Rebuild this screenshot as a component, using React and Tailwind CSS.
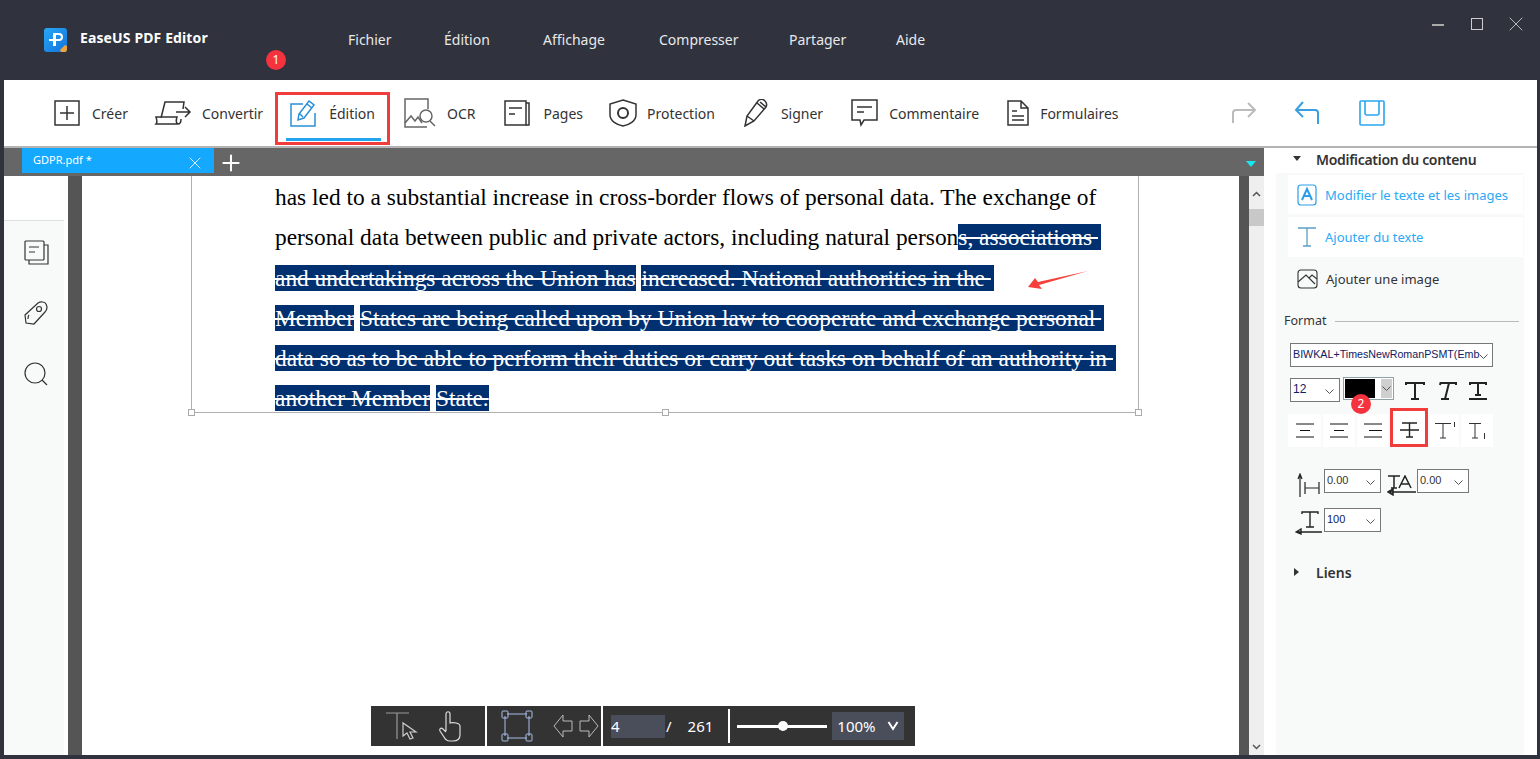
import { Plus, X } from 'lucide-react';

const ui = { fontFamily: '"Noto Sans", "Open Sans", sans-serif' };

const menu = [
  { label: 'Fichier', cls: 'w-[96px]' },
  { label: 'Édition', cls: 'w-[99px]' },
  { label: 'Affichage', cls: 'w-[116px]' },
  { label: 'Compresser', cls: 'w-[130px]' },
  { label: 'Partager', cls: 'w-[107px]' },
  { label: 'Aide', cls: 'w-[40px]' },
];

const Svg = ({ w, h, children, className = '', stroke = '#333', sw = 1.5 }) => (
  <svg width={w} height={h} viewBox={`0 0 ${w} ${h}`} fill="none" stroke={stroke} strokeWidth={sw} className={`shrink-0 ${className}`}>
    {children}
  </svg>
);

const CreerIcon = () => (
  <Svg w={26} h={26}>
    <rect x="1" y="1" width="24" height="24" />
    <path d="M13 6v14M6 13h14" />
  </Svg>
);
const ConvertirIcon = () => (
  <Svg w={38} h={26}>
    <path d="M7 18 11 2h19l-1 7M2 24h22c-2-1-2-4-1-7H2c1 3 1 6 0 7ZM24 24c2 0 3-2 3-5" />
    <path d="M22 12h14M31 7l5 5-5 5" />
  </Svg>
);
const EditionIcon = () => (
  <Svg w={26} h={28} stroke="#2b8fd6">
    <path d="M13 5H1v22h24V14" />
    <path d="m8 21 1-6L19 2l5 4-10 13-6 2ZM17 5l5 4M10 15l3 3" />
  </Svg>
);
const OcrIcon = () => (
  <Svg w={32} h={30} stroke="#666">
    <path d="M24 11V1H1v28h22" />
    <path d="m1 25 6-7 4 5 3-4 4 6" />
    <circle cx="22" cy="18" r="6" />
    <path d="m26 23 5 5" />
  </Svg>
);
const PagesIcon = () => (
  <Svg w={26} h={26}>
    <rect x="1" y="1" width="21" height="24" />
    <path d="M22 3h3v22H22M5 8h13M5 14h6" />
  </Svg>
);
const ProtectionIcon = () => (
  <Svg w={28} h={28}>
    <path d="M14 1 27 5v11c0 6-7 10-13 11C8 26 1 22 1 16V5L14 1Z" />
    <circle cx="14" cy="14" r="5" strokeWidth="2" />
  </Svg>
);
const SignerIcon = () => (
  <Svg w={26} h={28}>
    <path d="M2 27 4 17 15 2c2-2 4-2 6-1l1 1c2 2 2 4 1 6L11 22 2 27ZM4 17l7 5M14 4l7 6M17 3l6 5" />
  </Svg>
);
const CommentIcon = () => (
  <Svg w={28} h={28}>
    <path d="M1 1h25v20H13l-3 5-1-5H1V1Z" />
    <path d="M6 8h15M6 13h7" />
  </Svg>
);
const FormIcon = () => (
  <Svg w={22} h={26}>
    <path d="M1 1h13l7 7v17H1V1ZM14 1v7h7" />
    <path d="M5 11h5M5 16h12" />
    <path d="M5 20h12" />
  </Svg>
);

const tools = [
  { label: 'Créer', icon: CreerIcon, gap: 'gap-[12px]', cls: 'ml-[50px]' },
  { label: 'Convertir', icon: ConvertirIcon, gap: 'gap-[10px]', cls: 'ml-[26px]' },
  { label: 'Édition', icon: EditionIcon, gap: 'gap-[13px]', cls: 'ml-[27px]' },
  { label: 'OCR', icon: OcrIcon, gap: 'gap-[11px]', cls: 'ml-[29px]' },
  { label: 'Pages', icon: PagesIcon, gap: 'gap-[13px]', cls: 'ml-[29px]' },
  { label: 'Protection', icon: ProtectionIcon, gap: 'gap-[10px]', cls: 'ml-[26px]' },
  { label: 'Signer', icon: SignerIcon, gap: 'gap-[12px]', cls: 'ml-[28px]' },
  { label: 'Commentaire', icon: CommentIcon, gap: 'gap-[10px]', cls: 'ml-[28px]' },
  { label: 'Formulaires', icon: FormIcon, gap: 'gap-[11px]', cls: 'ml-[28px]' },
];

const Badge = ({ n, className }) => (
  <div className={`absolute w-[20px] h-[20px] rounded-full bg-[#f5333f] text-white text-[12px] flex items-center justify-center ${className}`}>{n}</div>
);

const Sel = ({ children, trail = false }) => (
  <span className={`bg-[#003070] text-white line-through decoration-2 decoration-white whitespace-pre ${trail ? 'pr-[3px]' : ''}`}>{children}</span>
);

const lines = [
  <>has led to a substantial increase in cross-border flows of personal data. The exchange of</>,
  <>personal data between public and private actors, including natural person<Sel trail>s, associations </Sel></>,
  <><Sel>and undertakings across the Union has</Sel> <Sel trail>increased. National authorities in the </Sel></>,
  <><Sel>Member</Sel> <Sel trail>States are being called upon by Union law to cooperate and exchange personal </Sel></>,
  <><Sel trail>data so as to be able to perform their duties or carry out tasks on behalf of an authority in </Sel></>,
  <><Sel>another Member</Sel> <Sel>State.</Sel></>,
];

const Chevron = ({ className = '' }) => (
  <svg width="9" height="6" viewBox="0 0 9 6" fill="none" stroke="#555" strokeWidth="1" className={className}>
    <path d="m.5.5 4 4 4-4" />
  </svg>
);

const Select = ({ value, className = '', textClass = 'text-[#102060] text-[12px]' }) => (
  <div className={`bg-white border border-[#777] h-[24px] flex items-start justify-between pl-[2px] pr-[5px] ${className}`}>
    <span className={`leading-[20px] whitespace-nowrap ${textClass}`} style={{ fontFamily: '"Liberation Sans", sans-serif' }}>{value}</span>
    <Chevron className="mt-[10px] shrink-0" />
  </div>
);

const Handle = ({ className }) => (
  <div className={`absolute w-[7px] h-[7px] bg-white border border-[#aaa] ${className}`} />
);

export default function App() {
  return (
    <div className="w-[1540px] h-[759px] bg-[#30333d] overflow-hidden flex flex-col relative" style={ui}>
      {/* title bar */}
      <div className="h-[80px] flex items-start shrink-0">
        <svg width="24" height="24" viewBox="0 0 24 24" className="ml-[44px] mt-[28px] shrink-0">
          <defs>
            <linearGradient id="logo" x1="0" y1="0" x2="1" y2="1">
              <stop offset="0" stopColor="#28a8f5" />
              <stop offset="1" stopColor="#1272dc" />
            </linearGradient>
          </defs>
          <rect width="23" height="24" rx="3" fill="url(#logo)" />
          <path d="M9 5h6c3 0 4 2 4 4s-1 4-4 4h-3v5H9v-5H5v-2h4V5Zm3 2v4h3c1 0 2-1 2-2s-1-2-2-2h-3Z" fill="#fff" />
          <path d="m16 22 5-5 2 1v3c0 2-1 3-2 3h-4l-1-2Z" fill="#f0a23c" />
        </svg>
        <div className="ml-[12px] mt-[28px] text-white text-[14px] font-bold leading-[20px] w-[268px] tracking-[0.12px]">EaseUS PDF Editor</div>
        <div className="flex mt-[30px] text-[#e8e8ea] text-[14px] leading-[20px]">
          {menu.map((m) => (
            <div key={m.label} className={m.cls}>{m.label}</div>
          ))}
        </div>
        <div className="ml-auto flex items-start mt-[18px] mr-[18px] gap-[27px]">
          <div className="w-[12px] h-[2px] bg-[#aaa] mt-[6px]" />
          <div className="w-[12px] h-[12px] border border-[#ccc]" />
          <X size={24} strokeWidth={0.8} color="#ddd" className="-m-[6px]" />
        </div>
      </div>

      <Badge n="1" className="left-[266px] top-[50px]" />

      {/* toolbar */}
      <div className="ml-[4px] mr-[3px] h-[68px] bg-white border-b-2 border-[#b4b4b4] flex items-center shrink-0 text-[14px] text-[#333] relative">
        {tools.map((t) => (
          <div key={t.label} className={`flex items-center ${t.gap} ${t.cls}`}>
            <t.icon />
            <span className="leading-[20px] mt-[2px]">{t.label}</span>
          </div>
        ))}
        <div className="ml-auto flex items-center mr-[152px]">
          <Svg w={26} h={22} stroke="#bbb" sw={2}>
            <path d="M2 21V11c0-2 1-3 3-3h19M17 1l7 7-7 7" />
          </Svg>
          <Svg w={26} h={24} stroke="#3a9fe0" sw={2} className="ml-[37px]">
            <path d="M24 23V12c0-2-1-3-3-3H2M9 1 2 9l7 7" />
          </Svg>
          <Svg w={26} h={26} stroke="#2ba6ee" sw={1.6} className="ml-[39px]">
            <rect x="1" y="1" width="24" height="24" rx="1" />
            <path d="M6 1v12c0 1 0 2 2 2h10c2 0 2-1 2-2V1" />
          </Svg>
        </div>
        {/* red highlight */}
        <div className="absolute left-[271px] top-[12px] w-[115px] h-[53px] border-[3px] border-[#f23c3c]">
          <div className="absolute left-[8px] right-[6px] bottom-[1px] h-[3px] bg-[#22a5ee]" />
        </div>
      </div>

      {/* body */}
      <div className="ml-[4px] mr-[3px] mb-[4px] flex-1 min-h-0 flex">
        <div className="w-[1260px] flex flex-col shrink-0">
          {/* tabs */}
          <div className="h-[28px] bg-[#666666] flex items-start shrink-0 relative">
            <div className="ml-[18px] w-[192px] h-[25px] bg-[#14a9ff] text-white text-[11px] flex items-center justify-between pl-[11px] pr-[9px]">
              <span>GDPR.pdf *</span>
              <X size={20} strokeWidth={1} color="#fff" className="mr-[0px] mt-[4px]" />
            </div>
            <Plus size={26} strokeWidth={1.9} color="#fff" className="ml-[4px] mt-[2px]" />
            <div className="absolute right-[8px] top-[13px] w-0 h-0 border-l-[5px] border-r-[5px] border-t-[6px] border-l-transparent border-r-transparent border-t-[#18e6f0]" />
          </div>
          <div className="flex-1 min-h-0 flex">
            {/* left sidebar */}
            <div className="w-[64px] bg-white shrink-0 flex flex-col">
              <div className="h-[45px] border-b border-[#e0e0e0] mr-[4px] shrink-0" />
              <div className="flex-1 bg-[#f8fafa] mr-[4px] flex flex-col items-start pl-[20px] pt-[19px] gap-[36px]">
                <Svg w={25} h={25} sw={1.2}>
                  <rect x="1" y="1" width="19" height="19" rx="1" />
                  <path d="M20 5h4v19H5v-4M5 7h10M5 12h6" />
                </Svg>
                <Svg w={24} h={25} sw={1.2}>
                  <path d="M1 14 14 2c3-2 7-1 8 1s2 5-1 8L10 23l-8-1-1-8Z" />
                  <circle cx="15" cy="8" r="2.5" />
                  <path d="M5 14c-1 1-1 3-1 4" />
                </Svg>
                <Svg w={24} h={24} sw={1.2}>
                  <circle cx="11" cy="11" r="10" />
                  <path d="m18 18 5 5" />
                </Svg>
              </div>
            </div>
            <div className="w-[14px] bg-[#555555] shrink-0" />
            {/* page */}
            <div className="w-[1156px] bg-white shrink-0 relative overflow-hidden">
              <div className="absolute left-[109px] top-[-8px] w-[948px] h-[245px] border border-[#b0b0b0]">
                <Handle className="-left-[4px] -bottom-[4px]" />
                <Handle className="left-[470px] -bottom-[4px]" />
                <Handle className="-right-[4px] -bottom-[4px]" />
              </div>
              <div className="pl-[193px] pt-[1px] relative text-black text-[23.4px]" style={{ fontFamily: '"Liberation Serif", serif' }}>
                {lines.map((l, i) => (
                  <div key={i} className="h-[40.3px] leading-[40px] whitespace-nowrap">{l}</div>
                ))}
              </div>
              {/* red arrow */}
              <svg width="62" height="22" viewBox="0 0 62 22" className="absolute left-[945px] top-[94px]">
                <path d="M61 1 12 15l3 4L1 17l7-9 3 4L61 1Z" fill="#f5403c" />
              </svg>
            </div>
            <div className="w-[1px] bg-white shrink-0" />
            <div className="w-[10px] bg-[#555555] shrink-0" />
            {/* scrollbar */}
            <div className="w-[15px] bg-[#efefef] shrink-0 flex flex-col items-center">
              <svg width="9" height="6" viewBox="0 0 9 6" fill="none" stroke="#555" strokeWidth="1.5" className="mt-[15px]">
                <path d="m1 5 3.5-3.5L8 5" />
              </svg>
              <div className="w-full h-[17px] bg-[#c8c8c8] mt-[12px]" />
              <svg width="9" height="6" viewBox="0 0 9 6" fill="none" stroke="#555" strokeWidth="1.5" className="mt-auto mb-[5px]">
                <path d="m1 1 3.5 3.5L8 1" />
              </svg>
            </div>
          </div>
        </div>

        {/* right panel */}
        <div className="flex-1 bg-white flex flex-col text-[#333]">
          <div className="h-[25px] flex items-center pl-[29px] shrink-0">
            <div className="w-0 h-0 border-l-[4px] border-r-[4px] border-t-[5px] border-l-transparent border-r-transparent border-t-[#333] mb-[4px]" />
            <div className="ml-[15px] mb-[2px] text-[14px] font-semibold leading-[20px] text-[#333] tracking-[-0.3px]">Modification du contenu</div>
          </div>
          <div className="ml-[12px] mr-[13px] flex-1 bg-[#f8fafa] pt-[2px] pl-[12px] relative">
            <div className="w-[235px] h-[39px] bg-white flex items-center pl-[9px] text-[#2aa9f5] text-[13px]">
              <svg width="20" height="22" viewBox="0 0 20 22" fill="none" stroke="#2a9fe8" strokeWidth="1.2">
                <path d="M1 4c0-2 1-3 3-3h12c2 0 3 1 3 3v14c0 2-1 3-3 3H4c-2 0-3-1-3-3V4Z" />
                <path d="m5 16 5-11 5 11M7 12h6" strokeWidth="2" />
              </svg>
              <span className="ml-[8px] mt-[2px]">Modifier le texte et les images</span>
            </div>
            <div className="w-[235px] h-[40px] bg-white flex items-center pl-[9px] text-[#2aa9f5] text-[13px] mt-[3px]">
              <svg width="20" height="20" viewBox="0 0 20 20" fill="none" stroke="#5b9fc4" strokeWidth="1.3">
                <path d="M1 1h18M10 1v18M6 19h8" />
              </svg>
              <span className="ml-[8px] mt-[2px]">Ajouter du texte</span>
            </div>
            <div className="h-[42px] mt-[1px] flex items-center pl-[9px] text-[#333] text-[13px]">
              <svg width="21" height="20" viewBox="0 0 21 20" fill="none" stroke="#333" strokeWidth="1.1">
                <rect x="1" y="1" width="19" height="18" rx="3" />
                <path d="m1 13 8-7 9 9M12 9l3-3 5 4" />
              </svg>
              <span className="ml-[8px] mt-[2px]">Ajouter une image</span>
            </div>
            <div className="flex items-center -ml-[4px] mt-[11px] h-[20px] text-[12.5px]">
              <span>Format</span>
              <div className="ml-[9px] w-[184px] h-px bg-[#bbb]" />
            </div>
            <Select value="BIWKAL+TimesNewRomanPSMT(Emb" className="w-[203px] mt-[12px] ml-[2px]" textClass="text-[#102060] text-[10.7px]" />
            <div className="flex items-start mt-[10px] ml-[2px]">
              <Select value="12" className="w-[50px] mt-[1px]" />
              <div className="ml-[3px] w-[51px] h-[23px] border border-[#8ea0a8] flex bg-white p-[1px]">
                <div className="w-[30px] bg-black" />
                <div className="ml-[6px] flex-1 bg-[#cfcfcf] flex items-center justify-center"><Chevron /></div>
              </div>
              <div className="flex ml-[11px] gap-[12px] mt-[5px]">
                <Svg w={20} h={18} stroke="#222" sw={2}>
                  <path d="M1 3V1h18v2M10 1v16M6 17h8" />
                </Svg>
                <Svg w={20} h={18} stroke="#222" sw={2}>
                  <path d="M3 3l.5-2H19v2M12 1 8 17M4 17h8" />
                </Svg>
                <Svg w={18} h={18} stroke="#222" sw={2}>
                  <path d="M1 3V1h16v2M9 1v12M6 13h6M0 17h18" />
                </Svg>
              </div>
            </div>
            <div className="flex items-center mt-[12px] h-[33px]">
              <div className="w-[33px] h-[33px] bg-white flex items-center justify-center">
                <Svg w={18} h={15} stroke="#111" sw={1}><path d="M0 1h18M4 7.500h10M0 14h18" /></Svg>
              </div>
              <div className="w-[32px] h-[33px] bg-white flex items-center justify-center ml-[2px]">
                <Svg w={18} h={15} stroke="#111" sw={1}><path d="M0 1h18M4 7.500h10M0 14h18" /></Svg>
              </div>
              <div className="w-[31px] h-[33px] bg-white flex items-center justify-center ml-[2px]">
                <Svg w={18} h={15} stroke="#111" sw={1}><path d="M0 1h18M5 7.500h13M0 14h18" /></Svg>
              </div>
              <div className="w-[38px] h-[39px] border-[3px] border-[#f23c3c] flex items-center justify-center ml-[2px] -mt-[6px] bg-white pt-[5px]">
                <Svg w={19} h={16} stroke="#222" sw={1.4}><path d="M2 1h15M9.500 1v14M6 15h7M0 8h19" /></Svg>
              </div>
              <div className="w-[29px] h-[33px] bg-white flex items-center justify-center ml-[2px]">
                <Svg w={22} h={17} stroke="#333" sw={1}><path d="M1 1.500h16M9 1.500V16M6 16h6M20.500 0v5" /></Svg>
              </div>
              <div className="w-[32px] h-[33px] bg-white flex items-center justify-center ml-[2px]">
                <Svg w={18} h={17} stroke="#333" sw={1}><path d="M1 1.500h12M7 1.500V16M4 16h6M16.500 11v6" /></Svg>
              </div>
            </div>
            <div className="flex items-start mt-[22px] ml-[9px] h-[24px]">
              <Svg w={25} h={24} stroke="#222" sw={1.2} className="mt-[4px]">
                <path d="M3 24V2M1 6l2-5 2 5M8 9v12M8 15h14M22 9v12" />
              </Svg>
              <Select value="0.00" className="w-[57px] ml-[2px]" textClass="text-[#333] text-[11px]" />
              <Svg w={29} h={22} stroke="#222" sw={1.5} className="ml-[6px] mt-[6px]">
                <path d="M1 1h12M7 1v12M4 13h6M12 13l6-12 6 12M14 9h8M3 17h26M1 17l5-3v6z" />
              </Svg>
              <Select value="0.00" className="w-[52px] ml-[1px]" textClass="text-[#333] text-[11px]" />
            </div>
            <div className="flex items-start mt-[15px] ml-[7px] h-[24px]">
              <Svg w={27} h={24} stroke="#222" sw={1.4} className="mt-[3px]">
                <path d="M7 3V1h16v2M15 1v15M11 16h8M1 21h26M1 21l5-3v5z" />
              </Svg>
              <Select value="100" className="w-[57px] ml-[2px]" textClass="text-[#102060] text-[11px]" />
            </div>
            <div className="flex items-center mt-[30px] ml-[6px] h-[20px]">
              <div className="w-0 h-0 border-t-[4px] border-b-[4px] border-l-[5px] border-t-transparent border-b-transparent border-l-[#333]" />
              <span className="ml-[17px] text-[14px] font-semibold">Liens</span>
            </div>
            <Badge n="2" className="left-[75px] top-[221px]" />
          </div>
        </div>
      </div>

      {/* floating page bar */}
      <div className="absolute left-[371px] top-[706px] h-[40px] flex gap-[2px] text-white text-[14px]">
        <div className="w-[114px] bg-[#333333] flex items-center pl-[15px]">
          <Svg w={36} h={30} stroke="#999" sw={1.2}>
            <path d="M0 2h23M11 2v26" />
            <path d="M17 12v13l4-3 3 6 3-1-3-6h6L17 12Z" stroke="#ccc" />
          </Svg>
          <Svg w={24} h={32} stroke="#ddd" sw={1.2} className="ml-[16px]">
            <path d="M8 21V4c0-3 4-3 4 0v9c3-1 10 0 10 3v9c0 4-3 6-7 6h-3c-3 0-5-2-6-4l-4-6c-1-2 1-4 3-2l3 3" />
          </Svg>
        </div>
        <div className="w-[114px] bg-[#333333] flex items-center pl-[14px]">
          <svg width="32" height="32" viewBox="0 0 32 32" fill="none" stroke="#a9bde8" strokeWidth="1">
            <path d="M6 4h20M6 28h20M4 6v20M28 6v20" />
            <rect x="1" y="1" width="6" height="7" rx="1" />
            <rect x="25" y="1" width="6" height="7" rx="1" />
            <rect x="1" y="24" width="6" height="7" rx="1" />
            <rect x="25" y="24" width="6" height="7" rx="1" />
          </svg>
          <svg width="46" height="24" viewBox="0 0 46 24" fill="none" stroke="#bbb" strokeWidth="1" className="ml-[20px]">
            <path d="M1 12 10 1v6h9v10h-9v6L1 12ZM45 12 36 1v6h-9v10h9v6l9-11Z" />
          </svg>
        </div>
        <div className="w-[312px] bg-[#333333] flex items-center">
          <div className="ml-[8px] w-[54px] h-[23px] bg-[#4a4e5a] text-[15px] leading-[23px]">4</div>
          <span className="ml-[1px] text-[15px]">/</span>
          <span className="ml-[16px] text-[15px]">261</span>
          <div className="ml-[15px] w-[2px] h-[34px] bg-white" />
          <div className="ml-[7px] w-[90px] h-[3px] bg-white relative">
            <div className="absolute left-[41px] -top-[4px] w-[10px] h-[10px] rounded-full bg-white" />
          </div>
          <div className="ml-[5px] w-[72px] h-[28px] bg-[#4a4e5a] flex items-center justify-between pl-[5px] pr-[5px] text-[15px]">
            <span>100%</span>
            <svg width="12" height="10" viewBox="0 0 12 10" fill="none" stroke="#fff" strokeWidth="2"><path d="m1.500 1 4.500 7 4.500-7" /></svg>
          </div>
        </div>
      </div>
    </div>
  );
}
